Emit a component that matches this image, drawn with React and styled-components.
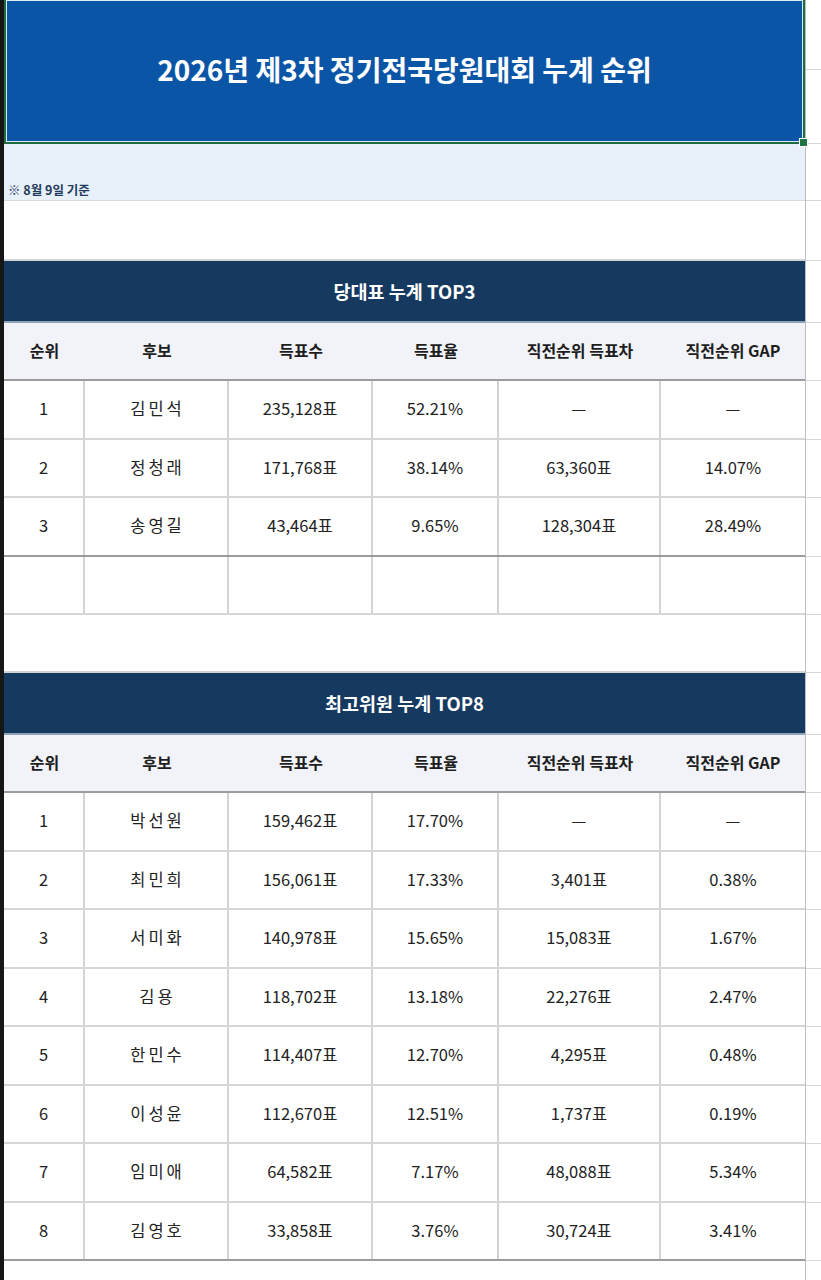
import React from "react";
import styled, { createGlobalStyle } from "styled-components";

const Global = createGlobalStyle`
  html, body { margin: 0; padding: 0; background: #ffffff; }
  body { font-family: "Noto Sans CJK KR", "Noto Sans", sans-serif; color: #1b1b1b; }
`;

const COLS = "81px 144px 144px 126px 162px 144px";

const Sheet = styled.div`
  display: flex;
  width: 821px;
  min-height: 1280px;
  overflow: hidden;
`;

const RowHeaderStrip = styled.div`
  width: 4px;
  flex: none;
  background: #161616;
`;

const Main = styled.div`
  width: 801px;
  flex: none;
  display: flex;
  flex-direction: column;
`;

const Gutter = styled.div`
  flex: 1;
  display: flex;
  flex-direction: column;
  border-left: 1px solid #bdbdbd;
`;

const GutterCell = styled.div`
  height: ${(p) => p.$h}px;
  flex: none;
  box-sizing: border-box;
  border-bottom: 1px solid #d6d6d6;
`;

const TitleCell = styled.div`
  position: relative;
  height: 144px;
  box-sizing: border-box;
  background: #0b55a7;
  border: 2px solid #1f6b42;
  border-top: none;
  box-shadow: inset 0 0 0 1px #d8ecf5;
  display: flex;
  align-items: center;
  justify-content: center;
`;

const Title = styled.h1`
  margin: 0;
  padding-bottom: 4px;
  font-size: 28px;
  font-weight: 700;
  color: #ffffff;
`;

const FillHandle = styled.span`
  position: absolute;
  right: -5px;
  bottom: -5px;
  width: 7px;
  height: 7px;
  background: #1f7346;
  border: 1px solid #ffffff;
`;

const NoteRow = styled.div`
  height: 57px;
  box-sizing: border-box;
  background: #e8f1fa;
  display: flex;
  align-items: flex-end;
  padding: 0 0 1px 4px;
  border-bottom: 1px solid #dadada;
  font-size: 12.5px;
  font-weight: 700;
  color: #1f3a5c;
`;

const BlankRow = styled.div`
  height: ${(p) => p.$h}px;
  box-sizing: border-box;
  border-bottom: 2px solid #cfd3d8;
`;

const SectionTitle = styled.div`
  height: 62px;
  box-sizing: border-box;
  background: #163a5f;
  display: flex;
  align-items: center;
  justify-content: center;
  font-size: 18.5px;
  font-weight: 700;
  color: #ffffff;
  border-bottom: 2px solid #8ea2b8;
`;

const Row = styled.div`
  display: grid;
  grid-template-columns: ${COLS};
  height: ${(p) => (p.$head ? 58 : 58.5)}px;
  box-sizing: border-box;
  background: ${(p) => (p.$head ? "#f1f3f8" : "#ffffff")};
  border-bottom: 2px solid ${(p) => (p.$strong ? "#9c9c9c" : "#d6d6d6")};
`;

const Cell = styled.div`
  display: flex;
  align-items: center;
  justify-content: center;
  box-sizing: border-box;
  font-size: ${(p) => (p.$head ? "16px" : "16.5px")};
  font-weight: ${(p) => (p.$head ? 700 : 400)};
  color: ${(p) => (p.$head ? "#1e1e1e" : "#222222")};
  letter-spacing: ${(p) => (p.$name ? "3px" : "0")};
  padding-left: ${(p) => (p.$name ? "3px" : "0")};
  border-right: ${(p) => (p.$head || p.$last ? "none" : "2px solid #d3d3d3")};
  padding-bottom: 2px;
`;

const HEADERS = ["순위", "후보", "득표수", "득표율", "직전순위 득표차", "직전순위 GAP"];

const TOP3 = [
  ["1", "김민석", "235,128표", "52.21%", "—", "—"],
  ["2", "정청래", "171,768표", "38.14%", "63,360표", "14.07%"],
  ["3", "송영길", "43,464표", "9.65%", "128,304표", "28.49%"],
];

const TOP8 = [
  ["1", "박선원", "159,462표", "17.70%", "—", "—"],
  ["2", "최민희", "156,061표", "17.33%", "3,401표", "0.38%"],
  ["3", "서미화", "140,978표", "15.65%", "15,083표", "1.67%"],
  ["4", "김용", "118,702표", "13.18%", "22,276표", "2.47%"],
  ["5", "한민수", "114,407표", "12.70%", "4,295표", "0.48%"],
  ["6", "이성윤", "112,670표", "12.51%", "1,737표", "0.19%"],
  ["7", "임미애", "64,582표", "7.17%", "48,088표", "5.34%"],
  ["8", "김영호", "33,858표", "3.76%", "30,724표", "3.41%"],
];

function DataRow({ values, strong }) {
  return (
    <Row $strong={strong}>
      {values.map((v, i) => (
        <Cell key={i} $name={i === 1} $last={i === values.length - 1}>
          {v}
        </Cell>
      ))}
    </Row>
  );
}

function RankTable({ title, rows, emptyRow }) {
  return (
    <>
      <SectionTitle>{title}</SectionTitle>
      <Row $head $strong>
        {HEADERS.map((h) => (
          <Cell key={h} $head>
            {h}
          </Cell>
        ))}
      </Row>
      {rows.map((r, i) => (
        <DataRow key={r[0]} values={r} strong={i === rows.length - 1} />
      ))}
      {emptyRow && <DataRow values={["", "", "", "", "", ""]} />}
    </>
  );
}

const GUTTER = [70, 74, 57, 60, 62, 58, 58.5, 58.5, 58.5, 58.5, 58, 62, 58, 58.5, 58.5, 58.5, 58.5, 58.5, 58.5, 58.5, 58.5, 60];

export default function App() {
  return (
    <>
      <Global />
      <Sheet>
        <RowHeaderStrip />
        <Main>
          <TitleCell>
            <Title>2026년 제3차 정기전국당원대회 누계 순위</Title>
            <FillHandle />
          </TitleCell>
          <NoteRow>※ 8월 9일 기준</NoteRow>
          <BlankRow $h={60} />
          <RankTable title="당대표 누계 TOP3" rows={TOP3} emptyRow />
          <BlankRow $h={58} />
          <RankTable title="최고위원 누계 TOP8" rows={TOP8} />
        </Main>
        <Gutter>
          {GUTTER.map((h, i) => (
            <GutterCell key={i} $h={h} />
          ))}
        </Gutter>
      </Sheet>
    </>
  );
}
